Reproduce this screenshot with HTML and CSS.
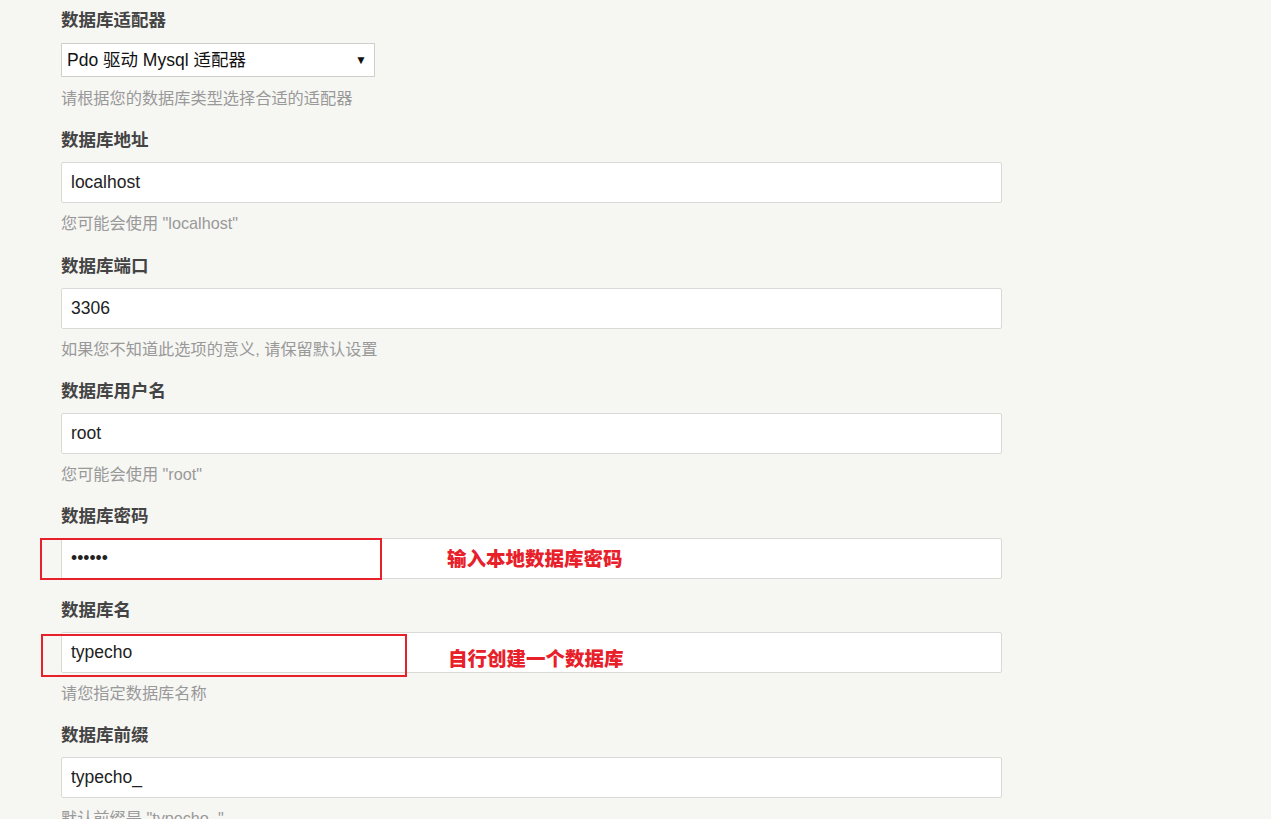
FILE: index.html
```html
<!DOCTYPE html>
<html lang="zh-CN">
<head>
<meta charset="utf-8">
<title>数据库配置</title>
<link rel="stylesheet" href="styles.css">
</head>
<body>
<div class="page">
  <div class="option first">
    <label class="label">数据库适配器</label>
    <div class="select-wrap">
      <select class="select"><option>Pdo 驱动 Mysql 适配器</option></select>
      <span class="arrow">▼</span>
    </div>
    <p class="desc">请根据您的数据库类型选择合适的适配器</p>
  </div>
  <div class="option wide">
    <label class="label">数据库地址</label>
    <input class="text" type="text" value="localhost">
    <p class="desc">您可能会使用 "localhost"</p>
  </div>
  <div class="option">
    <label class="label">数据库端口</label>
    <input class="text" type="text" value="3306">
    <p class="desc">如果您不知道此选项的意义, 请保留默认设置</p>
  </div>
  <div class="option">
    <label class="label">数据库用户名</label>
    <input class="text" type="text" value="root">
    <p class="desc">您可能会使用 "root"</p>
  </div>
  <div class="option nodesc">
    <label class="label">数据库密码</label>
    <div class="field">
      <input class="text" type="password" value="123456">
      <span class="mark mark-pwd"></span>
      <span class="note note-pwd">输入本地数据库密码</span>
    </div>
  </div>
  <div class="option">
    <label class="label">数据库名</label>
    <div class="field">
      <input class="text" type="text" value="typecho">
      <span class="mark mark-db"></span>
      <span class="note note-db">自行创建一个数据库</span>
    </div>
    <p class="desc">请您指定数据库名称</p>
  </div>
  <div class="option">
    <label class="label">数据库前缀</label>
    <input class="text" type="text" value="typecho_">
    <p class="desc">默认前缀是 "typecho_"</p>
  </div>
</div>
</body>
</html>
```

FILE: styles.css
```css
html, body {
  margin: 0;
  padding: 0;
  background: #f6f6f3;
}
body {
  font-family: "Liberation Sans", "Noto Sans CJK SC", sans-serif;
  color: #444;
  overflow: hidden;
  height: 819px;
}
.page {
  padding: 8px 0 0 61px;
  width: 941px;
}
.option {
  margin: 0 0 20px 0;
}
.option.wide {
  margin-bottom: 21px;
}
.option.nodesc {
  margin-bottom: 19px;
}
.label {
  display: block;
  font-size: 17.5px;
  font-weight: bold;
  line-height: 24px;
  height: 24px;
  margin-bottom: 10px;
  color: #444;
}
.first .label {
  margin-bottom: 11px;
}
.desc {
  margin: 10px 0 0 0;
  font-size: 16.2px;
  line-height: 20px;
  color: #999;
}
.first .desc {
  margin-top: 11px;
}
.text {
  display: block;
  box-sizing: border-box;
  width: 941px;
  height: 41px;
  margin: 0;
  padding: 0 9px;
  border: 1px solid #d9d9d6;
  border-radius: 2px;
  background: #fff;
  font-family: "Liberation Sans", "Noto Sans CJK SC", sans-serif;
  font-size: 17.5px;
  color: #222;
  outline: none;
}
.select-wrap {
  position: relative;
  width: 314px;
  height: 34px;
}
.select {
  display: block;
  box-sizing: border-box;
  width: 314px;
  height: 34px;
  margin: 0;
  padding: 0 0 0 5px;
  border: 1px solid #cfcfcc;
  border-radius: 0;
  background: #fff;
  -webkit-appearance: none;
  appearance: none;
  font-family: "Liberation Sans", "Noto Sans CJK SC", sans-serif;
  font-size: 17.5px;
  color: #111;
  outline: none;
}
.arrow {
  position: absolute;
  right: 8px;
  top: 9px;
  font-size: 12px;
  line-height: 16px;
  color: #111;
  pointer-events: none;
}
.field {
  position: relative;
}
.mark {
  position: absolute;
  box-sizing: border-box;
  border: 2px solid #e8202a;
  pointer-events: none;
}
.mark-pwd {
  left: -21px;
  top: 0;
  width: 342px;
  height: 42px;
}
.mark-db {
  left: -20px;
  top: 2px;
  width: 366px;
  height: 43px;
}
.note {
  position: absolute;
  font-family: "Noto Sans CJK SC", sans-serif;
  font-weight: 900;
  font-size: 19.5px;
  line-height: 24px;
  color: #e8202a;
  white-space: nowrap;
  text-shadow: 1px 0 0 #fff, -1px 0 0 #fff, 0 1px 0 #fff, 0 -1px 0 #fff,
    1px 1px 0 #fff, -1px -1px 0 #fff, 1px -1px 0 #fff, -1px 1px 0 #fff;
}
.note-pwd {
  left: 386px;
  top: 8px;
}
.note-db {
  left: 387px;
  top: 14px;
}
```
